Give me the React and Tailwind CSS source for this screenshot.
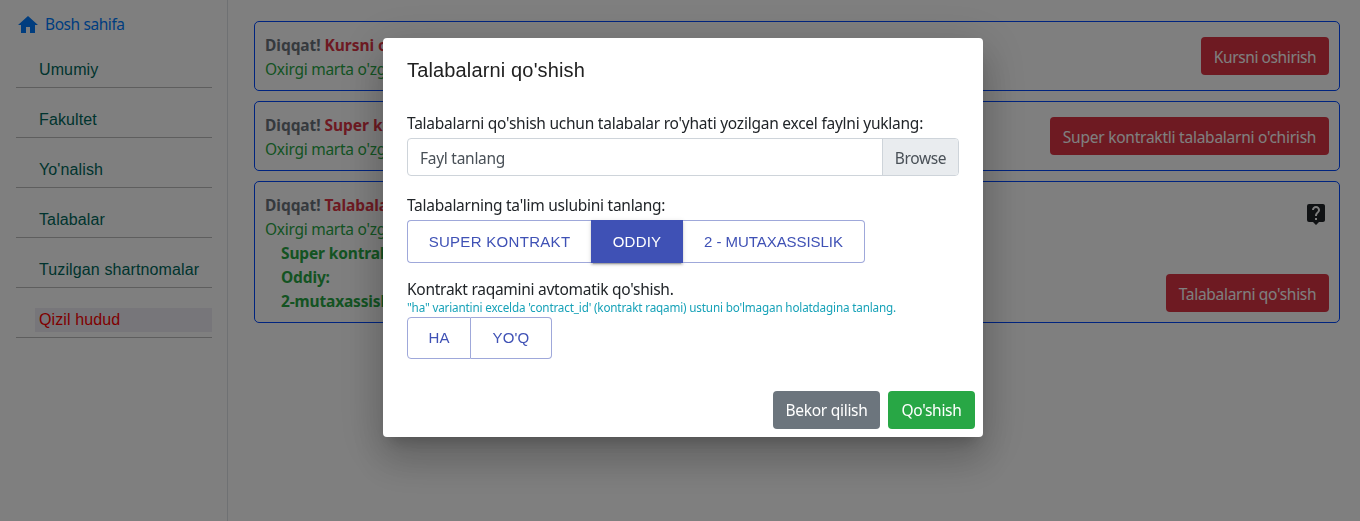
import { MdHome, MdLiveHelp } from "react-icons/md";

const arial = "font-['Liberation_Sans',Arial,sans-serif]";

const NAV = ["Umumiy", "Fakultet", "Yo'nalish", "Talabalar", "Tuzilgan shartnomalar", "Qizil hudud"];

function Sidebar() {
  return (
    <aside className="w-[228px] shrink-0 border-r border-[#dee2e6] pl-4 pr-[15px] pt-[13px]">
      <a className="flex h-6 items-start text-[#007bff]">
        <MdHome className="size-6" />
        <span className="-mt-px ml-[5px] tracking-[-0.42px]">Bosh sahifa</span>
      </a>
      <nav className={`mt-5 text-[16px] tracking-[0.12px] ${arial}`}>
        {NAV.map((item) => (
          <div
            key={item}
            className="mb-[19px] flex h-[31px] items-start border-b border-[#bdbdbd] pl-[19px] text-[#00695c]"
          >
            {item === "Qizil hudud" ? (
              <span className="mt-px h-6 w-full bg-[#eeecf5] pl-1 leading-6 text-[#ff0000]">{item}</span>
            ) : (
              <span className="mt-px h-6 whitespace-nowrap pl-1 leading-6">{item}</span>
            )}
          </div>
        ))}
      </nav>
    </aside>
  );
}

function Card({ title, button, buttonClass, tall, children }) {
  return (
    <section
      className={`flex justify-between rounded-[5px] border border-[#0048ff] px-2.5 ${tall ? "h-[142px] pt-[11px] pb-2.5" : "h-[70px] pt-[11px]"}`}
    >
      <div className="whitespace-nowrap">
        <p className="font-bold tracking-[-0.05px] text-[#6c757d]">
          Diqqat! <span className="text-[#dc3545]">{title}</span>
        </p>
        <p className="text-[#28a745]">Oxirgi marta o'zgartirilgan</p>
        {children}
      </div>
      <div className={tall ? "flex flex-col items-end justify-between" : "pt-1"}>
        {tall && <MdLiveHelp className="mr-px mt-[9px] size-6 text-[#212529]" />}
        <button className={`h-[38px] whitespace-nowrap rounded bg-[#dc3545] pt-px text-white ${buttonClass}`}>
          {button}
        </button>
      </div>
    </section>
  );
}

const choice = `flex items-center justify-center border border-[#9fa8da] text-[15px] text-[#3f51b5] ${arial}`;

function Modal() {
  return (
    <div className="fixed inset-0 flex items-start justify-center bg-black/50 pt-[38px] pl-[6px]">
      <div
        role="dialog"
        className="h-[399px] w-[600px] rounded bg-white shadow-[0_11px_15px_-7px_rgba(0,0,0,0.2),0_24px_38px_3px_rgba(0,0,0,0.14),0_9px_46px_8px_rgba(0,0,0,0.12)]"
      >
        <div className="px-6 pt-4">
          <h2 className={`h-8 text-[20px] leading-8 tracking-[0.15px] text-[#212121] ${arial}`}>
            Talabalarni qo'shish
          </h2>
          <p className="mt-[25px] whitespace-nowrap tracking-[-0.24px]">
            Talabalarni qo'shish uchun talabalar ro'yhati yozilgan excel faylni yuklang:
          </p>
          <div className="mt-[3px] flex h-[38px] w-[552px] overflow-hidden rounded border border-[#ced4da] leading-[38px] text-[#495057]">
            <span className="flex-1 pl-3">Fayl tanlang</span>
            <span className="w-[76px] border-l border-[#ced4da] bg-[#e9ecef] text-center tracking-[-0.35px]">
              Browse
            </span>
          </div>
          <p className="mt-[17px]">Talabalarning ta'lim uslubini tanlang:</p>
          <div className="mt-[3px] flex h-[43px]">
            <button className={`${choice} w-[184px] rounded-l border-r-0 tracking-[0.3px]`}>SUPER KONTRAKT</button>
            <button
              className={`flex w-[92px] items-center justify-center bg-[#3f51b5] text-[15px] tracking-[0.2px] text-white shadow-[0_3px_1px_-2px_rgba(0,0,0,0.2),0_2px_2px_0_rgba(0,0,0,0.14),0_1px_5px_0_rgba(0,0,0,0.12)] ${arial}`}
            >
              ODDIY
            </button>
            <button className={`${choice} w-[182px] rounded-r border-l-0 tracking-[-0.05px]`}>2 - MUTAXASSISLIK</button>
          </div>
          <p className="mt-3.5">Kontrakt raqamini avtomatik qo'shish.</p>
          <p className="h-4 whitespace-nowrap text-[11.7px] leading-[13px] tracking-[-0.165px] text-[#17a2b8]">
            "ha" variantini excelda 'contract_id' (kontrakt raqami) ustuni bo'lmagan holatdagina tanlang.
          </p>
          <div className="flex h-[42px]">
            <button className={`${choice} w-16 rounded-l tracking-[0.1px]`}>HA</button>
            <button className={`${choice} w-[81px] rounded-r border-l-0 tracking-[0.2px]`}>YO'Q</button>
          </div>
        </div>
        <div className="mt-8 flex justify-end gap-2 pr-2 text-white">
          <button className="h-[38px] w-[107px] rounded bg-[#6c757d]">Bekor qilish</button>
          <button className="h-[38px] w-[87px] rounded bg-[#28a745]">Qo'shish</button>
        </div>
      </div>
    </div>
  );
}

export default function App() {
  return (
    <div className="flex h-[521px] overflow-hidden bg-white font-['Noto_Sans','Open_Sans',sans-serif] text-[15.5px] leading-6 tracking-[-0.27px] text-[#212529]">
      <Sidebar />
      <main className="flex flex-1 flex-col gap-2.5 pl-[26px] pr-5 pt-[21px]">
        <Card title="Kursni oshirish" button="Kursni oshirish" buttonClass="w-32 tracking-[-0.4px]" />
        <Card
          title="Super kontraktli talabalarni o'chirish"
          button="Super kontraktli talabalarni o'chirish"
          buttonClass="w-[279px] tracking-[-0.24px]"
        />
        <Card
          title="Talabalarni qo'shish"
          button="Talabalarni qo'shish"
          buttonClass="w-[163px] tracking-[-0.3px]"
          tall
        >
          <div className="pl-4 font-bold tracking-[-0.15px] text-[#28a745]">
            <p>Super kontrakt:</p>
            <p>Oddiy:</p>
            <p>2-mutaxassislik:</p>
          </div>
        </Card>
      </main>
      <Modal />
    </div>
  );
}
